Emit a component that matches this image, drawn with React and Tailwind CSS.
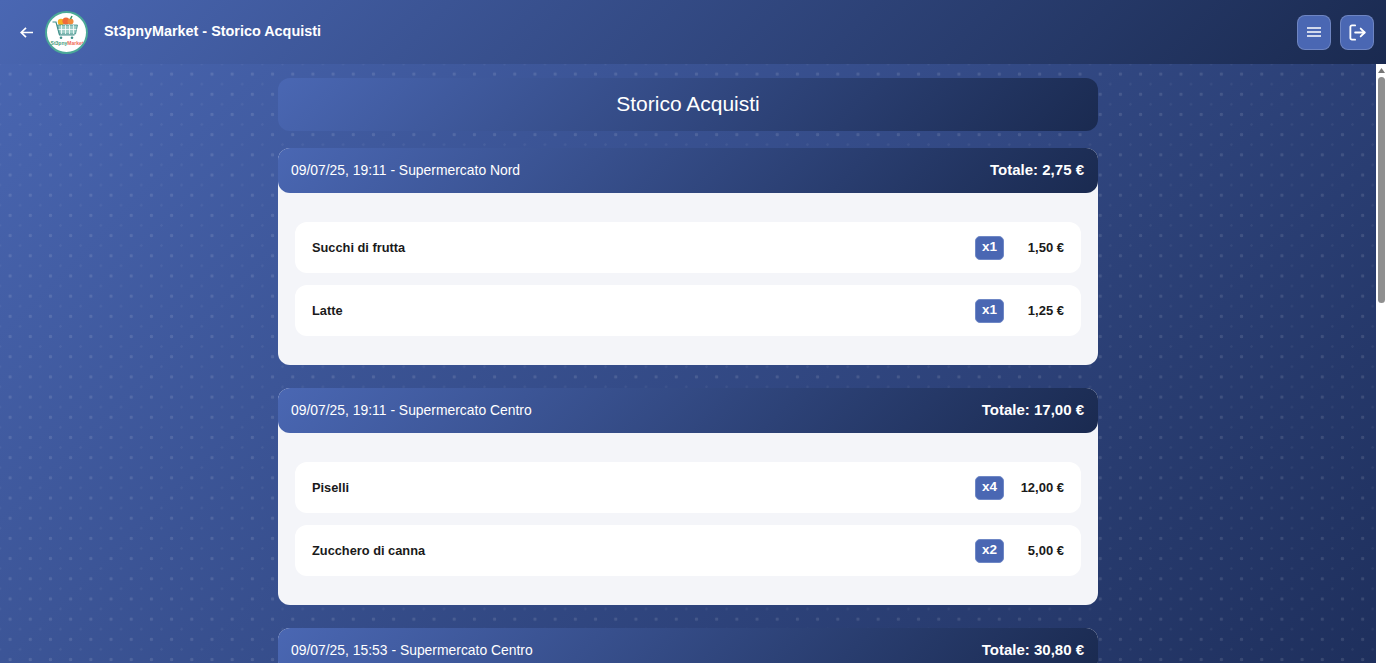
import { LogOut } from "lucide-react";

const orders = [
  {
    title: "09/07/25, 19:11 - Supermercato Nord",
    total: "2,75 €",
    items: [
      { name: "Succhi di frutta", qty: 1, price: "1,50 €" },
      { name: "Latte", qty: 1, price: "1,25 €" },
    ],
  },
  {
    title: "09/07/25, 19:11 - Supermercato Centro",
    total: "17,00 €",
    items: [
      { name: "Piselli", qty: 4, price: "12,00 €" },
      { name: "Zucchero di canna", qty: 2, price: "5,00 €" },
    ],
  },
  {
    title: "09/07/25, 15:53 - Supermercato Centro",
    total: "30,80 €",
    items: [],
  },
];

const gradient = "bg-[linear-gradient(135deg,#4a67b3_0%,#1a2a50_100%)]";

const Logo = () => (
  <div className="w-[43px] h-[43px] rounded-full bg-white border-2 border-[#4ba898] overflow-hidden shrink-0">
    <svg viewBox="2 2 39 39" className="w-full h-full">
      <circle cx="16" cy="11" r="3.2" fill="#f5b324" />
      <circle cx="21" cy="10" r="3.6" fill="#ef6a3a" />
      <circle cx="25.5" cy="10.5" r="3" fill="#f08a3c" />
      <path d="M25.5 8l1.5-3" stroke="#3f9a6b" strokeWidth="1.5" />
      <path d="M7.5 11h3.5l3.5 13h15" fill="none" stroke="#3f8f8a" strokeWidth="1.2" />
      <path d="M12.5 14h20l-2 9h-16z" fill="#9fcfc8" stroke="#3f8f8a" strokeWidth="0.8" />
      <path d="M16.5 14v9M20.5 14v9M24.5 14v9M28.5 14v9M13.5 18.5h18" stroke="#fff" strokeWidth="0.8" />
      <circle cx="16" cy="26.8" r="1.3" fill="#3f8f8a" />
      <circle cx="27" cy="26.8" r="1.3" fill="#3f8f8a" />
      <text x="22" y="34" textAnchor="middle" fontSize="5" fontWeight="700" fontFamily="Liberation Sans, sans-serif">
        <tspan fill="#3f9a7a">St3pny</tspan>
        <tspan fill="#ef6a5a">Market</tspan>
      </text>
    </svg>
  </div>
);

const IconButton = ({ children }) => (
  <button className="w-[34px] h-[35px] flex items-center justify-center rounded-lg bg-[#4a67b3] border border-white/20 text-white">
    {children}
  </button>
);

const OrderCard = ({ order }) => (
  <section className="bg-[#f4f5f9] rounded-xl">
    <div className={`${gradient} h-[45px] pl-[13px] pr-[14px] flex items-center justify-between rounded-xl text-white`}>
      <span className="text-[13.9px]">{order.title}</span>
      <span className="text-[15px] font-bold">Totale: {order.total}</span>
    </div>
    {order.items.length > 0 && (
      <ul className="px-[17px] py-[29px] flex flex-col gap-3">
        {order.items.map((item) => (
          <li key={item.name} className="h-[51px] px-[17px] bg-white rounded-xl flex items-center">
            <span className="flex-1 text-[12.8px] font-bold text-[#1a1a1a]">{item.name}</span>
            <span className="w-[29px] h-[24px] flex items-center justify-center rounded-[5px] bg-[#4a67b3] border border-[#6f88c6] text-white text-[13.5px] font-bold">
              x{item.qty}
            </span>
            <span className="w-[60px] text-right text-[13px] font-bold text-[#1a1a1a]">{item.price}</span>
          </li>
        ))}
      </ul>
    )}
  </section>
);

export default function App() {
  return (
    <div className="bg-[linear-gradient(135deg,#4a67b3_0%,#1e2f5c_100%)] h-screen flex flex-col overflow-hidden font-['Liberation_Sans',Arial,sans-serif]">
      <header className={`${gradient} h-16 shrink-0 pl-5 pr-3 flex items-center`}>
        <svg viewBox="0 0 13 11" className="w-[13px] h-[11px] mr-3 text-white" fill="none" stroke="currentColor" strokeWidth="1.7">
          <path d="M13 5.5H1.5M6 .8 1.2 5.5 6 10.2" />
        </svg>
        <Logo />
        <h1 className="ml-4 text-white font-bold text-[14.4px]">St3pnyMarket - Storico Acquisti</h1>
        <div className="ml-auto flex gap-[9px]">
          <IconButton>
            <svg viewBox="0 0 14 10" className="w-[14px] h-[10px]" fill="none" stroke="currentColor" strokeWidth="1.5">
              <path d="M0 1h14M0 5h14M0 9h14" />
            </svg>
          </IconButton>
          <IconButton>
            <LogOut className="w-[19px] h-[19px]" strokeWidth={2.3} />
          </IconButton>
        </div>
      </header>

      <div className="flex-1 min-h-0 flex">
        <main className="flex-1 overflow-y-auto [scrollbar-width:none] bg-[radial-gradient(rgba(255,255,255,0.11)_1.5px,transparent_2px),radial-gradient(rgba(255,255,255,0.05)_1px,transparent_1.5px)] bg-[length:20.2px_20.2px,20.2px_20.2px] bg-[position:0_0,10px_10px]">
          <div className="w-[820px] mx-auto pt-[14px] flex flex-col gap-[23px]">
            <div className={`${gradient} h-[53px] -mb-[6px] pb-[2px] rounded-xl flex items-center justify-center text-white text-[21px]`}>
              Storico Acquisti
            </div>
            {orders.map((order) => (
              <OrderCard key={order.title} order={order} />
            ))}
          </div>
        </main>

        <aside className="w-[10px] shrink-0 bg-white flex flex-col items-center pt-1">
          <svg viewBox="0 0 7 5" className="w-[7px] h-[5px]">
            <path d="M3.5 0L7 5H0z" fill="#777" />
          </svg>
          <div className="w-[7px] h-[226px] mt-1 rounded-full bg-[#8f8f8f]" />
        </aside>
      </div>
    </div>
  );
}
